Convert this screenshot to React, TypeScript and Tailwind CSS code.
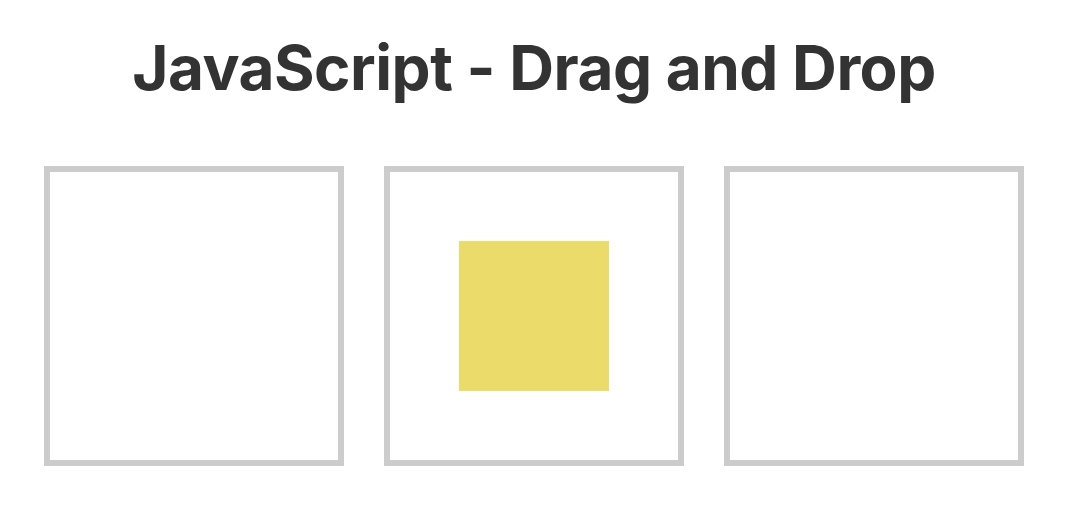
import React from 'react';

export default function App() {
  const boxes = [false, true, false];
  return (
    <div className="min-h-[510px] bg-white" style={{ fontFamily: 'Inter, "Liberation Sans", sans-serif' }}>
      <div className="ml-[44px] w-[980px] flex flex-col items-center">
        <h1 className="mt-[28px] text-[62px] leading-[80px] font-bold text-[#333] tracking-[-0.5px]">
          JavaScript - Drag and Drop
        </h1>
        <div className="mt-[58px] flex gap-[40px]">
          {boxes.map((filled, i) => (
            <div
              key={i}
              className="w-[300px] h-[300px] border-[6px] border-[#ccc] flex items-center justify-center"
            >
              {filled && <div draggable className="w-[150px] h-[150px] bg-[#ebdb6a]" />}
            </div>
          ))}
        </div>
      </div>
    </div>
  );
}
